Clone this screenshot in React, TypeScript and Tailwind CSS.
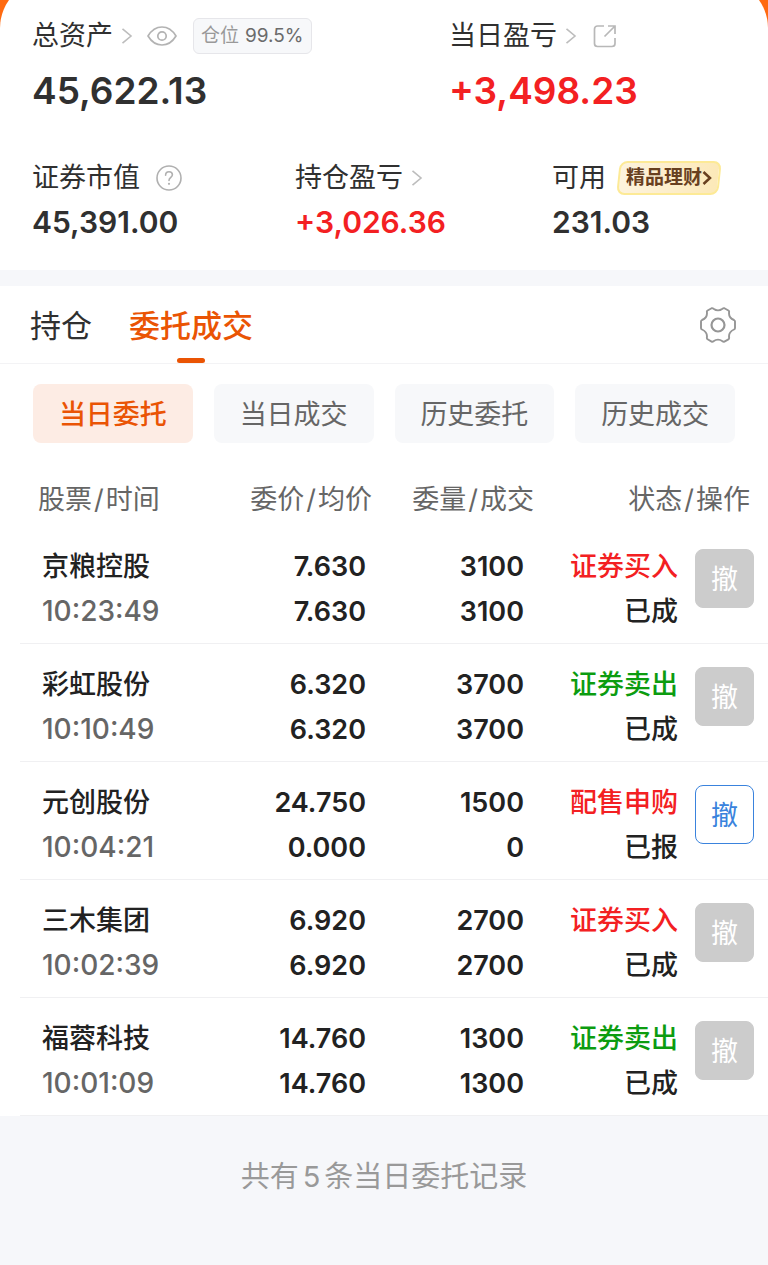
import React from 'react';
import clsx from 'clsx';

type Side = 'buy' | 'sell';

interface Order {
  name: string;
  time: string;
  price: string;
  avgPrice: string;
  amount: string;
  filled: string;
  action: string;
  side: Side;
  status: string;
  cancellable: boolean;
}

const orders: Order[] = [
  { name: '京粮控股', time: '10:23:49', price: '7.630', avgPrice: '7.630', amount: '3100', filled: '3100', action: '证券买入', side: 'buy', status: '已成', cancellable: false },
  { name: '彩虹股份', time: '10:10:49', price: '6.320', avgPrice: '6.320', amount: '3700', filled: '3700', action: '证券卖出', side: 'sell', status: '已成', cancellable: false },
  { name: '元创股份', time: '10:04:21', price: '24.750', avgPrice: '0.000', amount: '1500', filled: '0', action: '配售申购', side: 'buy', status: '已报', cancellable: true },
  { name: '三木集团', time: '10:02:39', price: '6.920', avgPrice: '6.920', amount: '2700', filled: '2700', action: '证券买入', side: 'buy', status: '已成', cancellable: false },
  { name: '福蓉科技', time: '10:01:09', price: '14.760', avgPrice: '14.760', amount: '1300', filled: '1300', action: '证券卖出', side: 'sell', status: '已成', cancellable: false },
];

const filters = ['当日委托', '当日成交', '历史委托', '历史成交'];

const Chevron: React.FC = () => (
  <svg className="ml-2 h-4 w-3" viewBox="0 0 12 16" fill="none" stroke="#bdbdbd" strokeWidth="1.6">
    <path d="M1.5 0.8 10 8l-8.500 7.200" />
  </svg>
);

const EyeIcon: React.FC = () => (
  <svg className="h-5 w-[30px]" viewBox="0 0 30 20" fill="none" stroke="#b3b3b3" strokeWidth="1.7">
    <path d="M1 10C4.500 4.200 9.300 1 15 1s10.500 3.200 14 9c-3.500 5.800-8.300 9-14 9S4.500 15.800 1 10Z" strokeLinejoin="round" />
    <circle cx="15" cy="10" r="4.200" />
  </svg>
);

const ShareIcon: React.FC = () => (
  <svg className="h-6 w-6" viewBox="0 0 24 24" fill="none" stroke="#b8b8b8" strokeWidth="1.7">
    <path d="M11 2H4.500A3 3 0 0 0 1.500 5v14.500a3 3 0 0 0 3 3h14.500a3 3 0 0 0 3-3V14" />
    <path d="M15 2h7v8M22 2 11.500 12.500" />
  </svg>
);

const HelpIcon: React.FC = () => (
  <svg className="h-[26px] w-[26px]" viewBox="0 0 26 26" fill="none" stroke="#b0b0b0" strokeWidth="1.6">
    <circle cx="13" cy="13" r="12" />
    <path d="M9.600 10.200c0-2.100 1.400-3.500 3.400-3.500s3.400 1.300 3.400 3.100c0 2.500-3.400 2.800-3.400 5.700" strokeLinecap="round" />
    <circle cx="13" cy="18.800" r="1.100" fill="#b0b0b0" stroke="none" />
  </svg>
);

const GearIcon: React.FC = () => (
  <svg className="h-9 w-9" viewBox="0 0 36 36" fill="none" stroke="#969696" strokeWidth="1.900" strokeLinejoin="round">
    <path d="M11.600 1.200Q12.600 0.900 13.500 1.700Q18 5 22.500 1.700Q23.400 0.900 24.400 1.200L28.400 3.500Q29.300 4 29.100 5.200Q28.400 10.800 34 13Q35 13.500 35 14.500V21Q35 22 34 22.500Q28.400 25 29.100 30.500Q29.300 31.800 28.400 32.300L24.400 34.600Q23.400 35 22.500 34.200Q18 31 13.500 34.200Q12.600 35 11.600 34.600L7.600 32.300Q6.700 31.800 6.900 30.500Q7.600 25 2 22.500Q1 22 1 21V14.500Q1 13.500 2 13Q7.600 10.800 6.900 5.200Q6.700 4 7.600 3.500Z" />
    <circle cx="18" cy="18" r="6.500" strokeWidth="2.200" />
  </svg>
);

const Pair: React.FC<{ first: string; second: string }> = ({ first, second }) => (
  <>
    {first}
    <span className="px-[2px]">/</span>
    {second}
  </>
);

const Summary: React.FC = () => (
  <section className="-mt-5 rounded-t-[48px] bg-white px-8 pt-9 pb-6 text-[#303030]">
    <div className="grid grid-cols-[417fr_287fr]">
      <div>
        <div className="flex h-10 items-center text-[27px]">
          <a href="#assets" className="flex items-center">总资产<Chevron /></a>
          <button type="button" aria-label="隐藏金额" className="ml-[14px]"><EyeIcon /></button>
          <span className="ml-4 flex h-9 items-center gap-[6px] rounded-md border border-[#e6e6ea] bg-[#f7f8fa] px-[7px] text-[19px] text-[#999]">
            仓位<span className="text-[#6b6b6b]">99.5%</span>
          </span>
        </div>
        <p className="mt-2 text-[37px] leading-[54px] font-semibold">45,622.13</p>
      </div>
      <div>
        <div className="flex h-10 items-center text-[27px]">
          <a href="#today" className="flex items-center">当日盈亏<Chevron /></a>
          <button type="button" aria-label="分享" className="ml-4"><ShareIcon /></button>
        </div>
        <p className="mt-2 text-[37px] leading-[54px] font-semibold text-[#f32022]">+3,498.23</p>
      </div>
    </div>

    <div className="mt-10 grid grid-cols-[263fr_257fr_184fr]">
      <div>
        <div className="flex h-10 items-center text-[27px]">
          证券市值
          <button type="button" aria-label="说明" className="ml-4"><HelpIcon /></button>
        </div>
        <p className="text-[30px] leading-[48px] font-semibold">45,391.00</p>
      </div>
      <div>
        <div className="flex h-10 items-center text-[27px]">
          <a href="#profit" className="flex items-center">持仓盈亏<Chevron /></a>
        </div>
        <p className="text-[30px] leading-[48px] font-semibold text-[#f32022]">+3,026.36</p>
      </div>
      <div>
        <div className="flex h-10 items-center text-[27px]">
          可用
          <a href="#wealth" className="relative ml-3 flex h-[34px] items-center px-2 text-[19px] font-bold whitespace-nowrap text-[#68401f]">
            <span className="absolute inset-0 -skew-x-6 rounded-lg border-2 border-[#fdea96] bg-linear-to-r from-[#fdf3de] to-[#fce9b8]" />
            <span className="relative">精品理财</span>
            <svg className="relative h-4 w-[10px]" viewBox="0 0 10 16" fill="none" stroke="#68401f" strokeWidth="2.500">
              <path d="M1.500 2 8 8l-6.500 6" />
            </svg>
          </a>
        </div>
        <p className="text-[30px] leading-[48px] font-semibold">231.03</p>
      </div>
    </div>
  </section>
);

const OrderRow: React.FC<{ order: Order }> = ({ order }) => (
  <tr className="border-b border-[#f0f0f2] align-top">
    <td className="pt-[18px] pb-[9px] pl-[22px]">
      <div>{order.name}</div>
      <div className="text-[28px] leading-[45px] text-[#666]">{order.time}</div>
    </td>
    <td className="pt-[18px] pr-[10px] text-right font-semibold">
      <div>{order.price}</div>
      <div>{order.avgPrice}</div>
    </td>
    <td className="pt-[18px] pr-[10px] text-right font-semibold">
      <div>{order.amount}</div>
      <div>{order.filled}</div>
    </td>
    <td className="pt-[18px] text-right whitespace-nowrap">
      <div className={order.side === 'buy' ? 'text-[#f32022]' : 'text-[#0c9c10]'}>{order.action}</div>
      <div>{order.status}</div>
    </td>
    <td className="pt-[23px] pr-[14px]">
      <button
        type="button"
        disabled={!order.cancellable}
        className={clsx(
          'ml-auto block h-[59px] w-[59px] rounded-lg border pt-[2px] text-[27px] leading-none font-normal',
          order.cancellable ? 'border-[#3a83dd] bg-white text-[#3a83dd]' : 'border-[#ccc] bg-[#ccc] text-white'
        )}
      >
        撤
      </button>
    </td>
  </tr>
);

const App: React.FC = () => {
  return (
    <div className="min-h-screen bg-[#f6f7fa] font-['Inter','Noto_Sans_CJK_SC',sans-serif]" lang="zh-CN">
      <div className="flow-root overflow-hidden bg-[#ff6a10]">
        <Summary />
      </div>

      <main className="mt-4 bg-white">
        <nav className="flex h-[78px] items-stretch border-b border-[#f3f3f5] pr-8 pl-[30px] text-[31px]">
          <a href="#holdings" className="flex items-center pt-[3px] text-[#303030]">持仓</a>
          <a href="#orders" className="relative ml-[37px] flex items-center pt-[3px] font-medium text-[#ea5404]">
            委托成交
            <span className="absolute bottom-0 left-1/2 h-[5px] w-7 -translate-x-1/2 rounded-sm bg-[#ea5404]" />
          </a>
          <button type="button" aria-label="设置" className="ml-auto"><GearIcon /></button>
        </nav>

        <div className="grid grid-cols-4 gap-[21px] px-[33px] pt-5">
          {filters.map((label, i) => (
            <button
              key={label}
              type="button"
              className={clsx(
                'h-[59px] rounded-lg pt-[3px] text-[27px]',
                i === 0 ? 'bg-[#fdece4] font-medium text-[#ea5404]' : 'bg-[#f7f8fa] text-[#666]'
              )}
            >
              {label}
            </button>
          ))}
        </div>

        <div className="pt-[34px] pl-5">
          <table className="w-full table-fixed text-[27px] leading-[45px] font-medium text-[#222]">
            <colgroup>
              <col className="w-[24%]" />
              <col />
              <col className="w-[158px]" />
              <col className="w-[144px]" />
              <col className="w-[90px]" />
            </colgroup>
            <thead>
              <tr className="h-[49px] align-top whitespace-nowrap text-[#666]">
                <th scope="col" className="pl-[18px] text-left font-normal"><Pair first="股票" second="时间" /></th>
                <th scope="col" className="pr-1 text-right font-normal"><Pair first="委价" second="均价" /></th>
                <th scope="col" className="text-right font-normal"><Pair first="委量" second="成交" /></th>
                <th scope="col" colSpan={2} className="pr-[18px] text-right font-normal"><Pair first="状态" second="操作" /></th>
              </tr>
            </thead>
            <tbody>
              {orders.map((order) => (
                <OrderRow key={order.time} order={order} />
              ))}
            </tbody>
          </table>
        </div>
      </main>

      <p className="py-9 text-center text-[29px] leading-[50px] text-[#999]">
        共有<span className="px-1">{orders.length}</span>条当日委托记录
      </p>
    </div>
  );
};

export default App;
